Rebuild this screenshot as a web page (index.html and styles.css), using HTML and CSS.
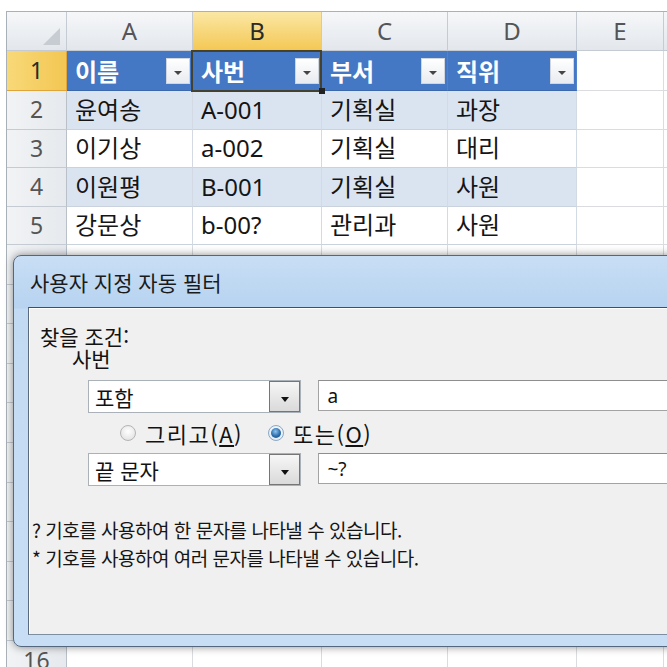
FILE: index.html
```html
<!DOCTYPE html>
<html lang="ko">
<head>
<meta charset="utf-8">
<title>사용자 지정 자동 필터</title>
<link rel="stylesheet" href="styles.css">
</head>
<body>
<div class="screen">
  <div class="sheet">
    <div class="row colhead">
      <div class="cell hd corner"></div>
      <div class="cell hd">A</div>
      <div class="cell hd sel">B</div>
      <div class="cell hd">C</div>
      <div class="cell hd">D</div>
      <div class="cell hd">E</div>
      <div class="cell hd"></div>
    </div>
    <div class="row r1">
      <div class="cell hd rn sel">1</div>
      <div class="cell th">이름<span class="dd"><i></i></span></div>
      <div class="cell th active">사번<span class="dd"><i></i></span></div>
      <div class="cell th">부서<span class="dd"><i></i></span></div>
      <div class="cell th">직위<span class="dd"><i></i></span></div>
      <div class="cell"></div>
      <div class="cell"></div>
    </div>
    <div class="row band">
      <div class="cell hd rn">2</div>
      <div class="cell t">윤여송</div>
      <div class="cell t">A-001</div>
      <div class="cell t">기획실</div>
      <div class="cell t">과장</div>
      <div class="cell"></div>
      <div class="cell"></div>
    </div>
    <div class="row">
      <div class="cell hd rn">3</div>
      <div class="cell t">이기상</div>
      <div class="cell t">a-002</div>
      <div class="cell t">기획실</div>
      <div class="cell t">대리</div>
      <div class="cell"></div>
      <div class="cell"></div>
    </div>
    <div class="row band">
      <div class="cell hd rn">4</div>
      <div class="cell t">이원평</div>
      <div class="cell t">B-001</div>
      <div class="cell t">기획실</div>
      <div class="cell t">사원</div>
      <div class="cell"></div>
      <div class="cell"></div>
    </div>
    <div class="row">
      <div class="cell hd rn">5</div>
      <div class="cell t">강문상</div>
      <div class="cell t">b-00?</div>
      <div class="cell t">관리과</div>
      <div class="cell t">사원</div>
      <div class="cell"></div>
      <div class="cell"></div>
    </div>
    <div class="row filler"><div class="cell hd rn"></div><div class="cell"></div><div class="cell"></div><div class="cell"></div><div class="cell"></div><div class="cell"></div><div class="cell"></div></div>
    <div class="row filler"><div class="cell hd rn"></div><div class="cell"></div><div class="cell"></div><div class="cell"></div><div class="cell"></div><div class="cell"></div><div class="cell"></div></div>
    <div class="row filler"><div class="cell hd rn"></div><div class="cell"></div><div class="cell"></div><div class="cell"></div><div class="cell"></div><div class="cell"></div><div class="cell"></div></div>
    <div class="row filler"><div class="cell hd rn"></div><div class="cell"></div><div class="cell"></div><div class="cell"></div><div class="cell"></div><div class="cell"></div><div class="cell"></div></div>
    <div class="row filler"><div class="cell hd rn"></div><div class="cell"></div><div class="cell"></div><div class="cell"></div><div class="cell"></div><div class="cell"></div><div class="cell"></div></div>
    <div class="row filler"><div class="cell hd rn"></div><div class="cell"></div><div class="cell"></div><div class="cell"></div><div class="cell"></div><div class="cell"></div><div class="cell"></div></div>
    <div class="row filler"><div class="cell hd rn"></div><div class="cell"></div><div class="cell"></div><div class="cell"></div><div class="cell"></div><div class="cell"></div><div class="cell"></div></div>
    <div class="row filler"><div class="cell hd rn"></div><div class="cell"></div><div class="cell"></div><div class="cell"></div><div class="cell"></div><div class="cell"></div><div class="cell"></div></div>
    <div class="row filler"><div class="cell hd rn"></div><div class="cell"></div><div class="cell"></div><div class="cell"></div><div class="cell"></div><div class="cell"></div><div class="cell"></div></div>
    <div class="row filler"><div class="cell hd rn"></div><div class="cell"></div><div class="cell"></div><div class="cell"></div><div class="cell"></div><div class="cell"></div><div class="cell"></div></div>
    <div class="row filler"><div class="cell hd rn">16</div><div class="cell"></div><div class="cell"></div><div class="cell"></div><div class="cell"></div><div class="cell"></div><div class="cell"></div></div>
  </div>

  <div class="dialog">
    <div class="titlebar">사용자 지정 자동 필터</div>
    <div class="content">
      <div class="labels">
        <div>찾을 조건:</div>
        <div class="fieldname">사번</div>
      </div>
      <div class="crow">
        <div class="combo"><span class="ctext">포함</span><span class="cbtn"><i></i></span></div>
        <div class="tbox">a</div>
      </div>
      <div class="radios">
        <span class="radio"></span><span class="rlabel">그리고(<u>A</u>)</span>
        <span class="radio on"><b></b></span><span class="rlabel">또는(<u>O</u>)</span>
      </div>
      <div class="crow">
        <div class="combo"><span class="ctext">끝 문자</span><span class="cbtn"><i></i></span></div>
        <div class="tbox">~?</div>
      </div>
      <div class="help">
        <div>? 기호를 사용하여 한 문자를 나타낼 수 있습니다.</div>
        <div>* 기호를 사용하여 여러 문자를 나타낼 수 있습니다.</div>
      </div>
    </div>
  </div>
</div>
</body>
</html>
```

FILE: styles.css
```css
* { box-sizing: border-box; }
html, body { margin: 0; padding: 0; }
body {
  background: #fff;
  font-family: "Noto Sans", "Noto Sans CJK KR", sans-serif;
}
.screen {
  position: relative;
  width: 667px;
  height: 667px;
  overflow: hidden;
  background: #fff;
}

/* ---------- spreadsheet ---------- */
.sheet {
  margin: 11px 0 0 6px;
  border-top: 1px solid #a9b0b8;
  border-left: 1px solid #a9b0b8;
  width: 720px;
}
.row {
  display: grid;
  grid-template-columns: 60px 126px 129px 126px 129px 87px 60px;
  height: 38.5px;
}
.row.colhead { height: 39px; }
.row.r1 { height: 40px; }
.row.filler { height: 39.6px; }

.cell {
  border-right: 1px solid #dadcdf;
  border-bottom: 1px solid #dadcdf;
  display: flex;
  align-items: center;
  padding-left: 8px;
  font-size: 24px;
  color: #151515;
  white-space: nowrap;
  overflow: hidden;
  line-height: 1;
}
.hd {
  justify-content: center;
  padding-left: 0;
  background: linear-gradient(#f6f7f9, #e3e7ec);
  color: #555;
  border-right-color: #c5cbd2;
  border-bottom-color: #c5cbd2;
}
.rn {
  font-size: 23px;
  background: linear-gradient(90deg, #f1f3f5, #e6e9ed);
  border-right-color: #b9c0c8;
}
.hd.sel {
  background: linear-gradient(#fbe7a4, #f4c855);
  border-bottom-color: #dfa53b;
  color: #2a2a2a;
}
.rn.sel {
  background: linear-gradient(90deg, #f8d978, #f3c653);
  border-right-color: #dfa53b;
}
.corner { position: relative; }
.corner::after {
  content: "";
  position: absolute;
  right: 6px;
  bottom: 5px;
  border-left: 17px solid transparent;
  border-bottom: 17px solid #c7ccd3;
}

/* table */
.th {
  background: #4478c4;
  color: #fff;
  font-weight: 700;
  justify-content: space-between;
  padding-right: 2px;
  border-right-color: #4f82c9;
  border-bottom-color: #3b68ab;
  font-family: "Noto Sans CJK KR", sans-serif;
}
.dd {
  width: 24px;
  height: 26px;
  background: linear-gradient(#ffffff, #e8ebf0);
  border: 1px solid #d0d6de;
  display: flex;
  align-items: center;
  justify-content: center;
  padding-top: 4px;
}
.dd i, .cbtn i {
  display: block;
  width: 0;
  height: 0;
  border-left: 4px solid transparent;
  border-right: 4px solid transparent;
  border-top: 4px solid #454545;
}
.active { position: relative; overflow: visible; }
.active::after {
  content: "";
  position: absolute;
  left: -2px;
  top: -1px;
  right: -1px;
  bottom: -2px;
  border: 2px solid #45412f;
}
.active::before {
  content: "";
  position: absolute;
  right: -4px;
  bottom: -4px;
  width: 6px;
  height: 6px;
  background: #222;
  z-index: 2;
}
.t {
  border-right-color: #d3dae3;
  border-bottom-color: #c9d2dd;
  font-family: "Noto Sans", "Noto Sans CJK KR", sans-serif;
}
.band .t { background: #dae4f1; }

/* ---------- dialog ---------- */
.dialog {
  position: absolute;
  left: 13px;
  top: 255px;
  width: 700px;
  height: 392px;
  background: linear-gradient(#c8def5, #b7d3f0 52px, #c3daf3 53px, #c8def5);
  border: 1px solid #55677c;
  border-radius: 8px;
  box-shadow: 0 0 9px rgba(0, 0, 0, 0.45);
  display: flex;
  flex-direction: column;
  font-family: "Noto Sans CJK KR", sans-serif;
}
.titlebar {
  height: 51px;
  padding-left: 16px;
  display: flex;
  align-items: center;
  font-size: 21px;
  color: #1b1b1b;
}
.content {
  flex: 1;
  margin: 0 0 11px 14px;
  background: #f0f0f0;
  border-top: 1px solid #3e4f63;
  border-left: 1px solid #5a6b80;
  border-bottom: 1px solid #7d8ea3;
  box-shadow: inset 1px 1px 0 #ffffff;
  font-size: 21px;
  color: #121212;
  padding: 17px 0 0 3px;
  display: flex;
  flex-direction: column;
}
.labels {
  line-height: 22px;
  margin-left: 8px;
}
.fieldname { margin-left: 32px; }
.crow {
  display: flex;
  margin: 11px 0 0 56px;
  height: 33px;
}
.radios + .crow { margin-top: 0; }
.combo {
  width: 217px;
  height: 33px;
  background: #fff;
  border: 1px solid #abb1b8;
  display: flex;
  align-items: center;
}
.ctext {
  flex: 1;
  padding-left: 6px;
  font-size: 21px;
}
.cbtn {
  width: 31px;
  height: 31px;
  border: 1px solid #767676;
  background: linear-gradient(#f6f6f6, #dadada);
  display: flex;
  align-items: center;
  justify-content: center;
  padding-top: 5px;
}
.cbtn i { border-top-color: #111; border-left-width: 4px; border-right-width: 4px; border-top-width: 5px; }
.tbox {
  margin-left: 17px;
  width: 400px;
  height: 31px;
  background: #fff;
  border: 1px solid #a3a3a3;
  border-top-color: #8e8e8e;
  display: flex;
  align-items: center;
  padding-left: 8px;
  font-family: "Noto Sans", "Noto Sans CJK KR", sans-serif;
  font-size: 19px;
}
.radios {
  height: 40px;
  display: flex;
  align-items: center;
  margin-left: 88px;
}
.radio {
  width: 16px;
  height: 16px;
  border-radius: 50%;
  border: 1px solid #b4b4b4;
  background: radial-gradient(circle at 50% 40%, #ffffff, #dcdcdc);
  display: flex;
  align-items: center;
  justify-content: center;
}
.radio.on {
  border-color: #8aa9c7;
  background: radial-gradient(circle at 50% 40%, #ffffff, #d9e6f2);
}
.radio b {
  width: 10px;
  height: 10px;
  border-radius: 50%;
  background: radial-gradient(circle at 45% 35%, #8fc3ee, #2a6cab 55%, #154a7c);
}
.rlabel {
  margin-left: 9px;
  margin-right: 25px;
  font-size: 22px;
  letter-spacing: 1.5px;
}
.help {
  margin-top: 30px;
  font-size: 19px;
  letter-spacing: -0.5px;
  line-height: 28px;
  color: #151515;
}
```
